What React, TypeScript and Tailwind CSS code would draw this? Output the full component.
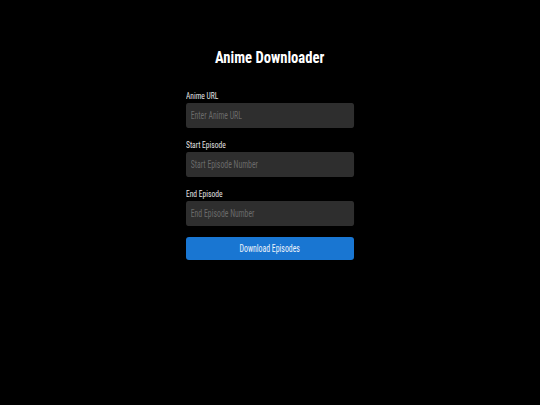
const fields = [
  { id: 'url', label: 'Anime URL', placeholder: 'Enter Anime URL' },
  { id: 'start', label: 'Start Episode', placeholder: 'Start Episode Number' },
  { id: 'end', label: 'End Episode', placeholder: 'End Episode Number' },
];

export default function App() {
  return (
    <div className="min-h-screen bg-black font-['Roboto_Condensed','Liberation_Sans',sans-serif] text-white">
      <div className="mx-auto flex w-[168px] flex-col pt-[47px]">
        <h1 className="mb-[23px] text-center text-[17px] leading-[20px] font-bold">
          <span className="inline-block origin-center scale-x-[0.86]">Anime Downloader</span>
        </h1>
        <form className="flex flex-col gap-[11px]" onSubmit={(e) => e.preventDefault()}>
          {fields.map((f) => (
            <div key={f.id} className="flex flex-col gap-[1px]">
              <label htmlFor={f.id} className="text-[9.5px] leading-[12px] text-[#e4e4e4]">
                <span className="inline-block origin-left scale-x-[0.79]">{f.label}</span>
              </label>
              {/* box is widened then squeezed so the placeholder gets the narrow look */}
              <input
                id={f.id}
                type="text"
                placeholder={f.placeholder}
                className="h-[25px] w-[216px] origin-left scale-x-[0.778] rounded-[3px] bg-[#2e2e2e] px-[6px] text-[10px] text-white outline-none placeholder:text-[#6a6a6a]"
              />
            </div>
          ))}
          <button
            type="submit"
            className="h-[23px] rounded-[3px] bg-[#1976d2] text-[10px] text-[#eef4fb]"
          >
            <span className="inline-block origin-center scale-x-[0.78]">Download Episodes</span>
          </button>
        </form>
      </div>
    </div>
  );
}
